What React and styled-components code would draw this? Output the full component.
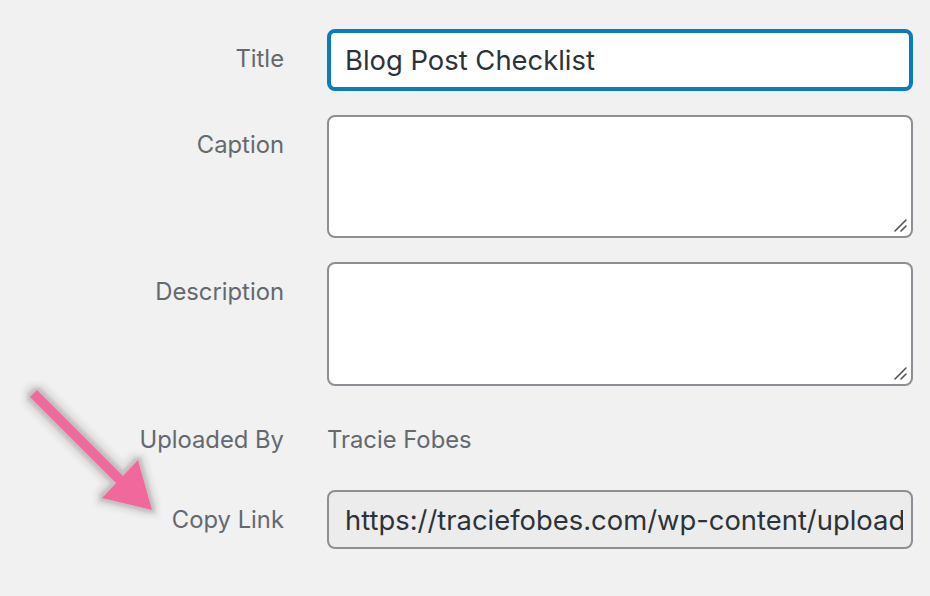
import styled, { createGlobalStyle } from "styled-components"

const GlobalStyle = createGlobalStyle`
  html, body {
    margin: 0;
    background: #f1f1f1;
  }
  body {
    font-family: Inter, "Liberation Sans", sans-serif;
  }
`

const Page = styled.div`
  position: relative;
  width: 930px;
  height: 596px;
  overflow: hidden;
  background: #f1f1f1;
  padding-top: 29px;
  box-sizing: border-box;
`

const Form = styled.div`
  display: grid;
  grid-template-columns: 284px 586px;
  column-gap: 43px;
  row-gap: 24px;
`

const Label = styled.label`
  justify-self: end;
  padding-top: 15px;
  line-height: 30px;
  font-size: 23.8px;
  color: #646970;
`

const Value = styled.div`
  padding: 15px 0 11px 0;
  line-height: 30px;
  font-size: 23.8px;
  color: #646970;
`

const TextInput = styled.input`
  box-sizing: border-box;
  width: 100%;
  height: ${p => (p.$focused ? "62px" : "59px")};
  border: ${p => (p.$focused ? "4px solid #0a7bbd" : "2px solid #8c8f94")};
  padding: 0 8px 0 ${p => (p.$focused ? "14px" : "16px")};
  border-radius: 8px;
  background: ${p => (p.$readOnly ? "#ececec" : "#fff")};
  font-family: Inter, "Liberation Sans", sans-serif;
  font-size: 27.4px;
  color: #2c3338;
  outline: none;
`

const Area = styled.div`
  position: relative;
  box-sizing: border-box;
  height: ${p => p.$h}px;
  border: 2px solid #8c8f94;
  border-radius: 8px;
  background: #fff;
`

const Grip = styled.svg`
  position: absolute;
  right: 3px;
  bottom: 3px;
`

const Arrow = styled.svg`
  position: absolute;
  left: 0;
  top: 380px;
`

const TextArea = ({ h }) => (
  <Area $h={h}>
    <Grip width="16" height="16" viewBox="0 0 16 16">
      <path d="M3 14 L14 3 M9 14 L14 9" stroke="#555" strokeWidth="1.6" strokeLinecap="round" />
    </Grip>
  </Area>
)

const App = () => {
  return (
    <Page>
      <GlobalStyle />
      <Form>
        <Label>Title</Label>
        <TextInput $focused defaultValue="Blog Post Checklist" />
        <Label>Caption</Label>
        <TextArea h={123} />
        <Label>Description</Label>
        <TextArea h={124} />
        <Label>Uploaded By</Label>
        <Value>Tracie Fobes</Value>
        <Label>Copy Link</Label>
        <TextInput $readOnly readOnly defaultValue="https://traciefobes.com/wp-content/uploads/2019/03/blog-post-checklist.pdf" />
      </Form>
      <Arrow width="180" height="150" viewBox="0 0 180 150">
        <defs>
          <filter id="glow" x="-30%" y="-30%" width="160%" height="160%">
            <feMorphology in="SourceAlpha" operator="dilate" radius="7" result="d1" />
            <feGaussianBlur in="d1" stdDeviation="2" result="b1" />
            <feFlood floodColor="#e2e2e2" />
            <feComposite in2="b1" operator="in" result="s1" />
            <feMorphology in="SourceAlpha" operator="dilate" radius="3" result="d2" />
            <feGaussianBlur in="d2" stdDeviation="1.5" result="b2" />
            <feFlood floodColor="#c4c0c2" />
            <feComposite in2="b2" operator="in" result="s2" />
            <feMerge>
              <feMergeNode in="s1" />
              <feMergeNode in="s2" />
              <feMergeNode in="SourceGraphic" />
            </feMerge>
          </filter>
        </defs>
        <g filter="url(#glow)">
          <path d="M37 17 L122 102" stroke="#f0679c" strokeWidth="10" strokeLinecap="square" />
          <polygon points="102,118 138,80 152,130" fill="#f0679c" />
        </g>
      </Arrow>
    </Page>
  )
}

export default App
